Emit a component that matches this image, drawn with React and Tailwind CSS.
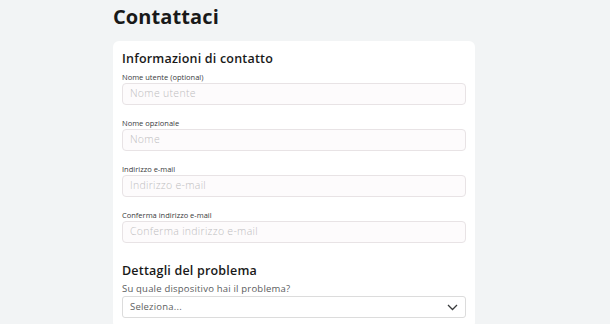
import React from "react";

function Field({ label, placeholder }) {
  return (
    <div className="flex flex-col">
      <label className="text-[7.5px] leading-[10px] text-[#393b3d] mb-[1px]">{label}</label>
      <div className="h-[22px] rounded-[4px] border border-[#e8e3e5] bg-[#fdfbfc] flex items-center px-[7px] text-[10.5px] font-light text-[#bdbdbf] tracking-[0.3px]">
        {placeholder}
      </div>
    </div>
  );
}

export default function App() {
  return (
    <div className="w-[610px] h-[324px] bg-[#f2f4f5] overflow-hidden" style={{ fontFamily: '"Open Sans", sans-serif' }}>
      <div className="pl-[113px] w-[475px]">
        <h1 className="pt-[4px] h-[41px] text-[20px] leading-[26px] font-bold text-[#191919] tracking-[0.1px]">Contattaci</h1>
        <div className="bg-white rounded-[6px] w-[362px] px-[9px] pt-[9px] pb-[10px]">
          <h2 className="text-[12.5px] leading-[18px] font-semibold text-[#191919] tracking-[0.2px] mb-[4px]">Informazioni di contatto</h2>
          <div className="flex flex-col gap-[13px]">
            <Field label="Nome utente (optional)" placeholder="Nome utente" />
            <Field label="Nome opzionale" placeholder="Nome" />
            <Field label="Indirizzo e-mail" placeholder="Indirizzo e-mail" />
            <Field label="Conferma indirizzo e-mail" placeholder="Conferma indirizzo e-mail" />
          </div>
          <h2 className="mt-[19px] text-[12.5px] leading-[18px] font-semibold text-[#191919] tracking-[0.2px]">Dettagli del problema</h2>
          <div className="mt-[2px] text-[9.5px] leading-[13px] text-[#5a5c5e] tracking-[0.2px]">Su quale dispositivo hai il problema?</div>
          <div className="mt-[1px] h-[22px] rounded-[3px] border border-[#dcdcdc] bg-white flex items-center justify-between px-[7px] text-[9.5px] text-[#606162] tracking-[0.2px]">
            <span>Seleziona...</span>
            <svg width="11" height="7" viewBox="0 0 11 7" fill="none" stroke="#393b3d" strokeWidth="1.3"><path d="M1 1l4.5 4.5L10 1" /></svg>
          </div>
        </div>
      </div>
    </div>
  );
}
